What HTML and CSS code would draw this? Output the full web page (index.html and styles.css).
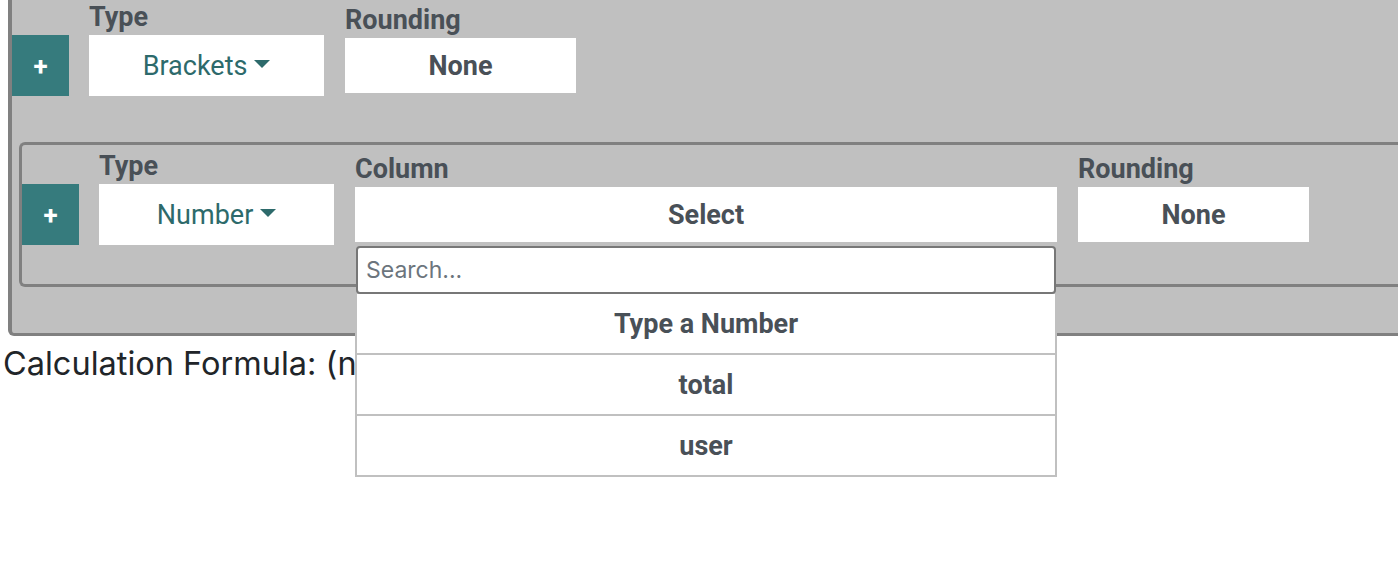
FILE: index.html
```html
<!DOCTYPE html>
<html lang="en">
<head>
    <meta charset="UTF-8">
    <meta name="viewport" content="width=device-width, initial-scale=1.0">
    <title>Calculation Builder</title>
    <link rel="stylesheet" href="styles.css">
</head>
<body>
    <div class="builder">
        <!-- Grupo principal -->
        <div class="group">
            <div class="group-row">
                <button class="add-btn">+</button>
                <div class="field field-type">
                    <label>Type</label>
                    <div class="select-box type-select"><span class="dropdown-toggle">Brackets</span></div>
                </div>
                <div class="field field-rounding">
                    <label>Rounding</label>
                    <div class="select-box">None</div>
                </div>
            </div>

            <!-- Grupo anidado -->
            <div class="group nested">
                <div class="group-row">
                    <button class="add-btn">+</button>
                    <div class="field field-type">
                        <label>Type</label>
                        <div class="select-box type-select"><span class="dropdown-toggle">Number</span></div>
                    </div>
                    <div class="field field-column">
                        <label>Column</label>
                        <div class="select-box">Select</div>

                        <div class="column-menu">
                            <input type="text" class="column-search" placeholder="Search...">
                            <div class="column-option">Type a Number</div>
                            <div class="column-option">total</div>
                            <div class="column-option">user</div>
                        </div>
                    </div>
                    <div class="field field-rounding">
                        <label>Rounding</label>
                        <div class="select-box">None</div>
                    </div>
                </div>
            </div>
        </div>

        <p class="formula">Calculation Formula: (number)</p>
    </div>
</body>
</html>
```

FILE: styles.css
```css
html, body {
    height: 100%;
}

body {
    margin: 0;
    padding: 0;
    background: #ffffff;
    color: #212529;
    font-family: 'Roboto', 'Liberation Sans', sans-serif;
}

.builder {
    margin-top: -7px; /* la vista está desplazada un poco hacia abajo */
}

/* Caja gris de cada grupo (sigue más allá del borde derecho) */
.group {
    background-color: #c0c0c0;
    border: 3px solid #808080;
    border-left-width: 4px;
    border-right: none;
    border-radius: 6px 0 0 6px;
    padding: 5px 0 0 0;
    margin-left: 8px;
}

.group.nested {
    border-left-width: 3px;
    margin: 7px 0 46px 7px;
}

.group-row {
    display: flex;
    align-items: center;
    gap: 21px;
    padding-bottom: 39px;
}

.add-btn {
    align-self: flex-end;
    width: 57px;
    height: 61px;
    margin-right: -1px;
    border: none;
    background-color: #367b7d;
    color: #ffffff;
    font-family: 'Roboto', sans-serif;
    font-size: 26px;
    font-weight: bold;
    padding: 0;
    cursor: pointer;
}

.field {
    position: relative;
    display: flex;
    flex-direction: column;
}

.field label {
    font-size: 27px;
    line-height: 32px;
    font-weight: bold;
    color: #495057;
    margin-bottom: 2px;
}

.field-type { width: 235px; }
.field-rounding { width: 231px; }
.field-column { width: 702px; }

.select-box {
    height: 55px;
    background-color: #ffffff;
    display: flex;
    align-items: center;
    justify-content: center;
    font-size: 27px;
    font-weight: bold;
    color: #495057;
}

.select-box.type-select {
    height: 61px;
    font-weight: normal;
    color: #2d6a6b;
}

/* Flecha del desplegable */
.dropdown-toggle::after {
    content: "";
    display: inline-block;
    margin-left: .255em;
    vertical-align: .255em;
    border-top: .3em solid;
    border-right: .3em solid transparent;
    border-left: .3em solid transparent;
}

/* Menú de columnas abierto */
.column-menu {
    position: absolute;
    top: calc(100% + 4px);
    left: 0;
    right: 0;
    z-index: 10;
}

.column-search {
    display: block;
    box-sizing: border-box;
    width: calc(100% - 2px);
    height: 48px;
    margin: 0 1px;
    padding: 0 8px;
    border: 2px solid #777777;
    border-radius: 4px;
    background-color: #ffffff;
    font-family: 'Inter', 'Liberation Sans', sans-serif;
    font-size: 23px;
    color: #212529;
    outline: none;
}

.column-search::placeholder {
    color: #6c757d;
}

.column-option {
    height: 59px;
    display: flex;
    align-items: center;
    justify-content: center;
    background-color: #ffffff;
    border: 2px solid #c0c0c0;
    border-top: none;
    font-size: 27px;
    font-weight: bold;
    color: #495057;
}

.formula {
    margin: 8px 0 0 0;
    padding-left: 3px;
    font-family: 'Inter', 'Liberation Sans', sans-serif;
    font-size: 32.5px;
    line-height: 1.2;
    color: #212529;
}
```
